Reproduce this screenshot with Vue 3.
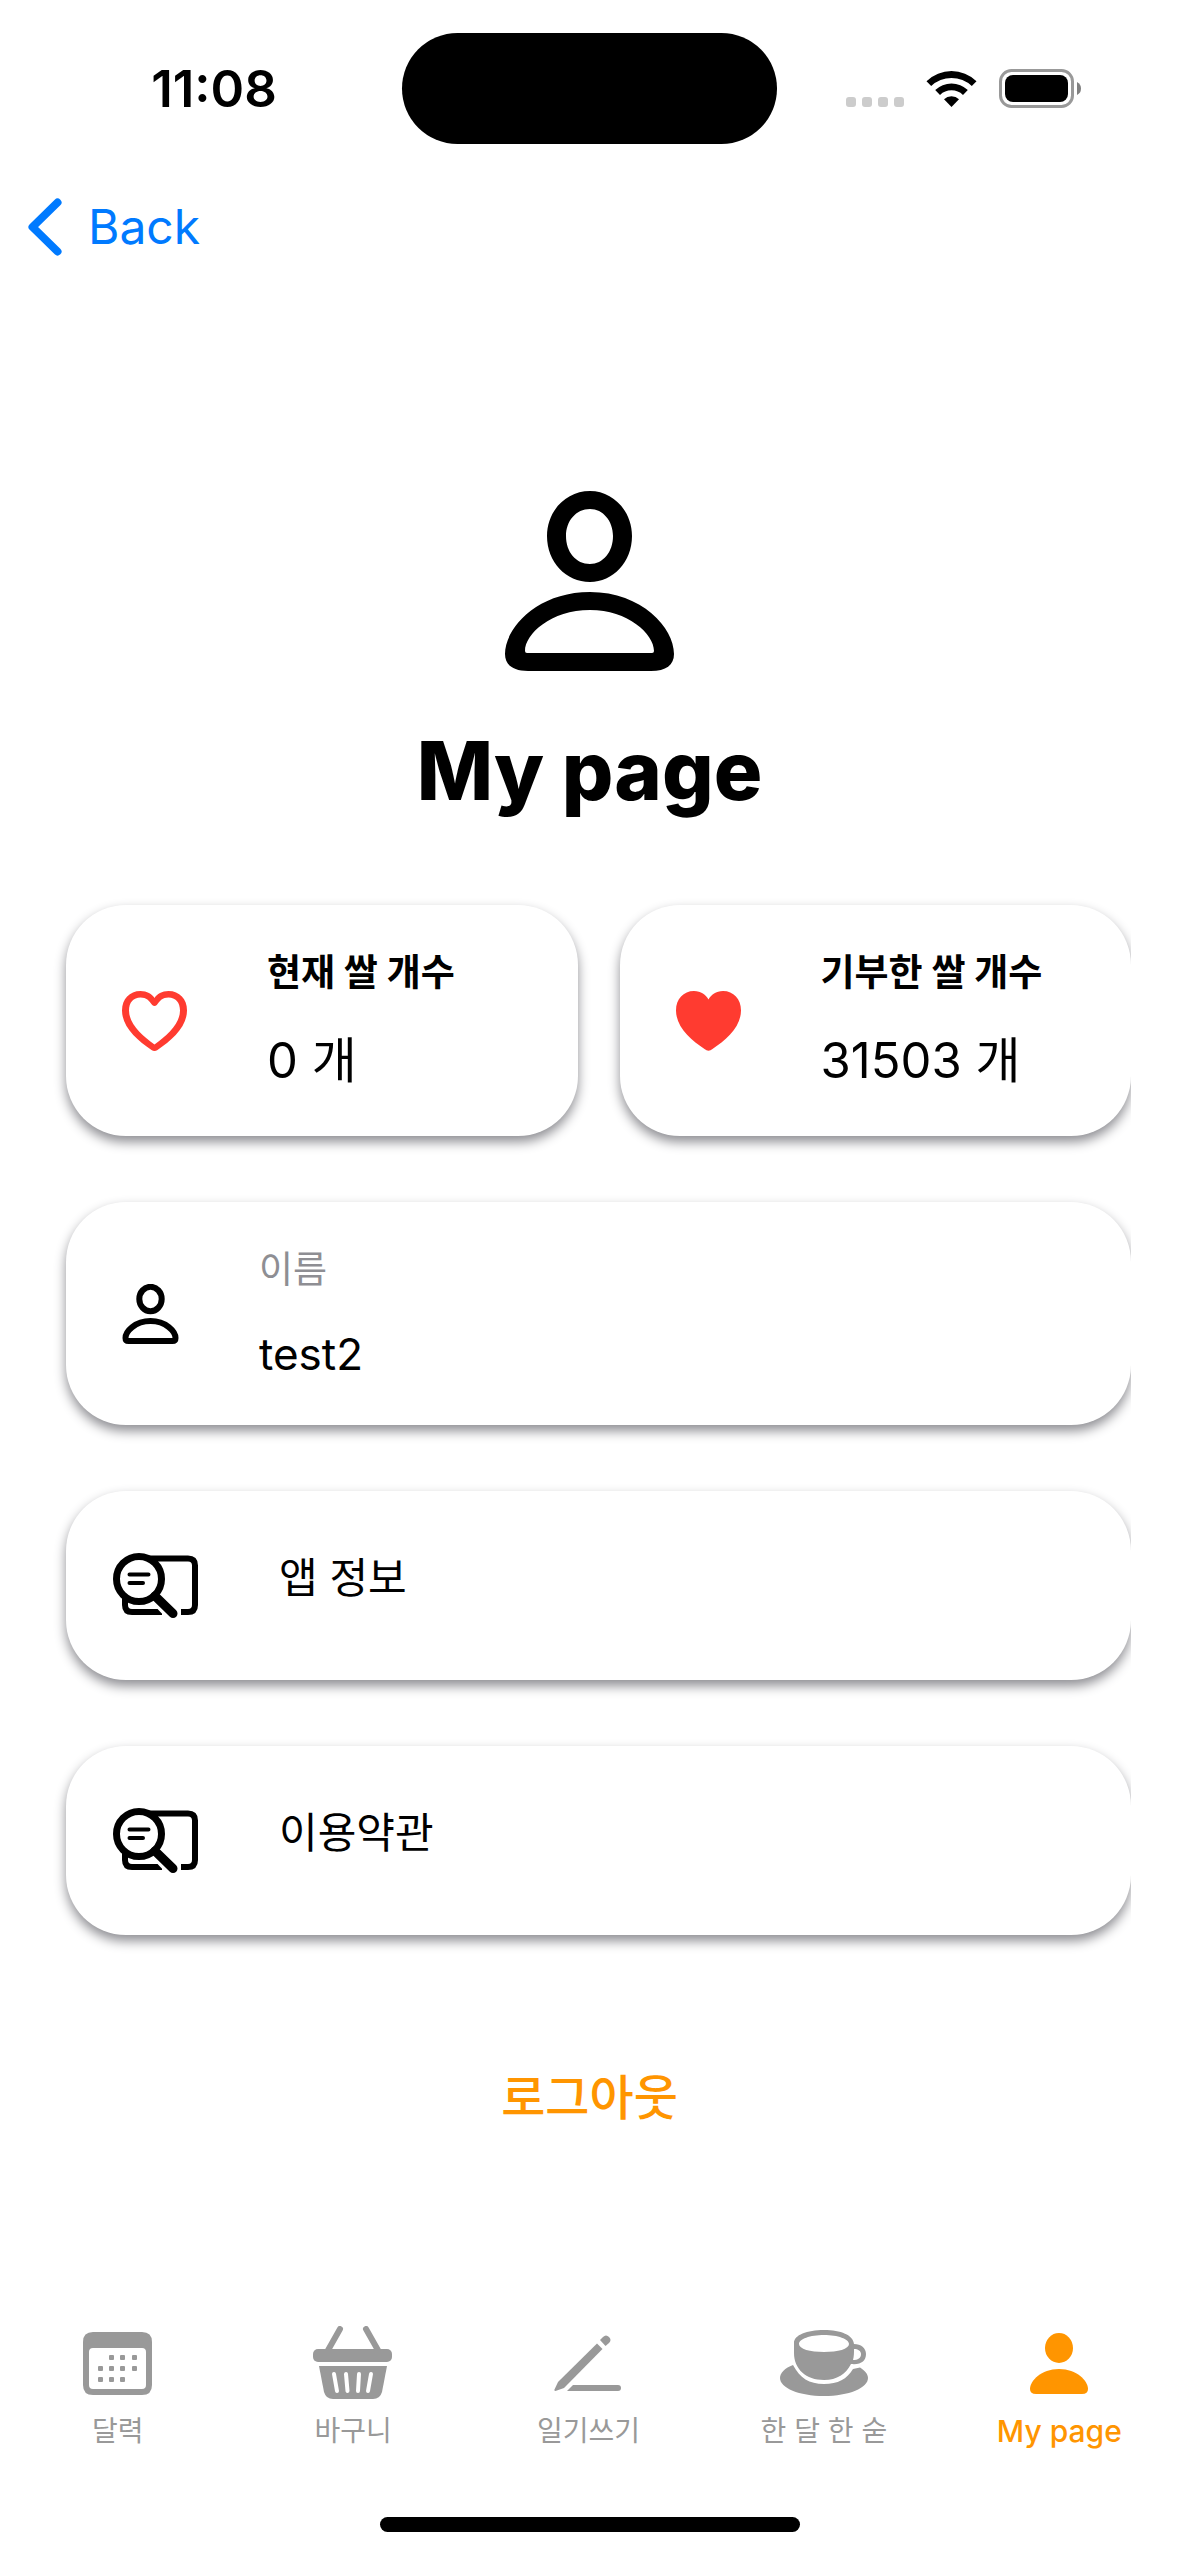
<script setup>
import { ref } from 'vue'

const stats = [
  { id: 'current', label: '현재 쌀 개수', value: '0 개', filled: false },
  { id: 'donated', label: '기부한 쌀 개수', value: '31503 개', filled: true },
]

const links = [
  { id: 'info', label: '앱 정보' },
  { id: 'terms', label: '이용약관' },
]

const tabs = [
  { id: 'calendar', label: '달력' },
  { id: 'basket', label: '바구니' },
  { id: 'write', label: '일기쓰기' },
  { id: 'cup', label: '한 달 한 숟' },
  { id: 'mypage', label: 'My page' },
]

const activeTab = ref('mypage')
const calendarDots = [
  [28, 23], [39, 23], [51, 23],
  [17, 34], [28, 34], [39, 34], [51, 34],
  [17, 45], [28, 45], [39, 45],
]
</script>

<template>
  <div class="screen">
    <header class="status">
      <div class="status-side">
        <time class="clock">11:08</time>
      </div>
      <div class="island"></div>
      <div class="status-side indicators">
        <svg class="signal" width="58" height="10" viewBox="0 0 58 10" aria-hidden="true">
          <rect v-for="n in 4" :key="n" :x="(n - 1) * 16" y="0" width="10" height="10" rx="3" />
        </svg>
        <svg class="wifi" width="51" height="38" viewBox="0 0 51 38" aria-hidden="true">
          <path d="M0.5 11.2 A36 36 0 0 1 50.5 11.2 L45.8 16 A29.5 29.5 0 0 0 5.2 16 Z" />
          <path d="M9.2 20 A23.5 23.5 0 0 1 41.8 20 L37 25 A16.6 16.6 0 0 0 14 25 Z" />
          <path d="M18 29.2 A11 11 0 0 1 33 29.2 L25.5 37 Z" />
        </svg>
        <svg class="battery" width="83" height="39" viewBox="0 0 83 39" aria-hidden="true">
          <rect x="1.5" y="1.5" width="72" height="36" rx="11" fill="none" stroke="#999" stroke-width="3" />
          <rect x="6" y="6" width="63" height="27" rx="8" />
          <path d="M78 13 Q82 15 82 19.500 Q82 24 78 26 Z" fill="#808080" />
        </svg>
      </div>
    </header>

    <nav class="topbar">
      <button class="back" type="button">
        <svg width="34" height="58" viewBox="0 0 34 58" aria-hidden="true">
          <path d="M29.500 4.500 L4.500 29 L29.500 53.500" fill="none" stroke="currentColor" stroke-width="8" stroke-linecap="round" stroke-linejoin="round" />
        </svg>
        <span>Back</span>
      </button>
    </nav>

    <main class="content">
      <section class="hero">
        <svg width="170" height="180" viewBox="0 0 170 180" aria-hidden="true">
          <path fill-rule="evenodd" d="M85 0 C108 0 127 20 127 45 C127 71 108 91 85 91 C61 91 42 71 42 45 C42 20 61 0 85 0 Z M85 18 C71 18 61 30 61 45 C61 61 71 73 85 73 C98 73 108 61 108 45 C108 30 98 18 85 18 Z" />
          <path fill-rule="evenodd" d="M85 101 C137 101 169 137 169 163 C169 174 161 180 146 180 H23 C8 180 0 174 0 163 C0 137 32 101 85 101 Z M85 119 C46 119 20 143 20 160 Q20 162 22 162 H147 Q149 162 149 160 C149 143 123 119 85 119 Z" />
        </svg>
        <h1>My page</h1>
      </section>

      <div class="cards">
        <div class="stats">
          <section v-for="stat in stats" :key="stat.id" class="card stat">
            <svg class="heart" width="65" height="60" viewBox="0 0 65 60" aria-hidden="true">
              <path v-if="stat.filled" d="M32.500 8.500 C35 4 40 0 47 0 C57.500 0 65 8 65 19.500 C65 36 50 49 36.500 58 Q32.500 61.500 28.500 58 C15 49 0 36 0 19.500 C0 8 7.500 0 18 0 C25 0 30 4 32.500 8.500 Z" />
              <path v-else fill-rule="evenodd" d="M32.500 7 C35 3 40 0 46.500 0 C57.500 0 65 8 65 19.500 C65 36 50 49 35.500 59 Q32.500 61 29.500 59 C15 49 0 36 0 19.500 C0 8 7.500 0 18.500 0 C25 0 30 3 32.500 7 Z M32.500 53.500 C45 44.500 58 33 58 19.500 C58 11.500 53.500 6.500 46.500 6.500 C40.500 6.500 38 9.500 34.800 14 Q32.500 16 30.200 14 C27 9.500 24.500 6.500 18.500 6.500 C11.500 6.500 7 11.500 7 19.500 C7 33 20 44.500 32.500 53.500 Z" />
            </svg>
            <div class="lines">
              <h2>{{ stat.label }}</h2>
              <p class="amount">{{ stat.value }}</p>
            </div>
          </section>
        </div>

        <section class="card profile">
          <svg width="57" height="60" viewBox="0 0 57 60" fill="none" stroke="#000" stroke-width="6" aria-hidden="true">
            <ellipse cx="28.500" cy="15" rx="11.200" ry="12.200" />
            <path d="M28.500 37 C44 37 53.500 47.500 53.500 54 Q53.500 57 50.500 57 H6.500 Q3.500 57 3.500 54 C3.500 47.500 13 37 28.500 37 Z" />
          </svg>
          <div class="lines">
            <p class="caption">이름</p>
            <p class="name">test2</p>
          </div>
        </section>

        <a v-for="link in links" :key="link.id" class="card link" :href="'#' + link.id">
          <svg width="86" height="66" viewBox="0 0 86 66" fill="none" stroke="#000" aria-hidden="true">
            <path d="M36 5.500 H75 Q82 5.500 82 12.500 V52 Q82 59 75 59 H68 M12 44 V52 Q12 59 19 59 H49" stroke-width="6" />
            <path d="M39 38 L60 60" stroke="#fff" stroke-width="17" />
            <circle cx="26" cy="26" r="22.500" fill="#fff" stroke-width="7" />
            <path d="M42 43 L60 60.500" stroke-width="9" stroke-linecap="round" />
            <path d="M16.500 21.500 H35.500 M16.500 30 H30" stroke-width="4" stroke-linecap="round" />
          </svg>
          <span>{{ link.label }}</span>
        </a>
      </div>

      <button class="logout" type="button">로그아웃</button>
    </main>

    <footer class="bottom">
      <nav class="tabs">
        <button
          v-for="tab in tabs"
          :key="tab.id"
          class="tab"
          :class="{ active: tab.id === activeTab }"
          type="button"
          @click="activeTab = tab.id"
        >
          <span class="tab-icon">
            <svg v-if="tab.id === 'calendar'" width="69" height="63" viewBox="0 0 69 63" aria-hidden="true">
              <path fill-rule="evenodd" d="M10 0 H59 Q69 0 69 10 V53 Q69 63 59 63 H10 Q0 63 0 53 V10 Q0 0 10 0 Z M10 16 Q6 16 6 20 V53 Q6 57 10 57 H59 Q63 57 63 53 V20 Q63 16 59 16 Z" />
              <rect v-for="([x, y], i) in calendarDots" :key="i" :x="x - 2" :y="y" width="5" height="5" rx="1" />
            </svg>
            <svg v-else-if="tab.id === 'basket'" width="80" height="74" viewBox="0 0 80 74" aria-hidden="true">
              <path d="M27 3 L14 26 M53 3 L66 26" fill="none" stroke="currentColor" stroke-width="6" stroke-linecap="round" />
              <rect x="0" y="23" width="79" height="13" rx="5" />
              <path d="M6 40 H74 L69 66 Q67 73 60 73 H20 Q13 73 11 66 Z" />
              <path d="M21 48 L24 65 M33 48 L34.500 65 M46 48 L45 65 M58 48 L55 65" stroke="#fff" stroke-width="4" stroke-linecap="round" />
            </svg>
            <svg v-else-if="tab.id === 'write'" width="68" height="57" viewBox="0 0 68 57" aria-hidden="true">
              <path d="M43 8.500 L48.500 14 L10 53 L1.500 56 Q0 56 0.500 54.500 L4 47 Z" />
              <path d="M46 5 L49 2 Q52 -1 55 2 Q58 5 55 8 L51.500 11 Z" />
              <path d="M13 56 L19 50 H64 Q67 50 67 53 Q67 56 64 56 Z" />
            </svg>
            <svg v-else-if="tab.id === 'cup'" width="88" height="66" viewBox="0 0 88 66" aria-hidden="true">
              <path d="M13 35 C20 48 29 54 44 54 C58 54 67 49 73 39 L80 37.500 C85 41 88 44 88 48 C88 58 69 66 44 66 C19 66 0 58 0 48 C0 43 5 38 13 35 Z" />
              <path fill-rule="evenodd" d="M44 0 C61 0 73 5 74 14 C81 14 86 18 86 24 C86 31 81 35 71 34 C66 44 57 50 44 50 C26 50 14 39 14 23 V13 C14 5 27 0 44 0 Z M44 5 C30 5 19 9 19 14 C19 19 30 22 44 22 C58 22 69 19 69 14 C69 9 58 5 44 5 Z M74 19 C74 23 74 26 73 30 C78 30 81 28 81 24 C81 21 78 19 74 19 Z" />
            </svg>
            <svg v-else width="58" height="61" viewBox="0 0 58 61" aria-hidden="true">
              <ellipse cx="29" cy="15" rx="14" ry="15" />
              <path d="M29 36 C47 36 58 48 58 56 Q58 61 52 61 H6 Q0 61 0 56 C0 48 11 36 29 36 Z" />
            </svg>
          </span>
          <span class="tab-label">{{ tab.label }}</span>
        </button>
      </nav>
      <div class="home-bar"></div>
    </footer>
  </div>
</template>

<style>
body {
  background: #fff;
}
</style>

<style scoped>
.screen {
  display: flex;
  flex-direction: column;
  min-height: 100vh;
  color: #000;
  font-family: Inter, "Noto Sans CJK KR", sans-serif;
}

h1,
h2,
p {
  margin: 0;
}

button {
  padding: 0;
  border: 0;
  background: none;
  font: inherit;
}

svg {
  display: block;
  flex: none;
}

.status {
  display: grid;
  grid-template-columns: minmax(0, 1fr) 375px minmax(0, 1fr);
  padding-top: 33px;
}

.status-side {
  display: flex;
  align-items: center;
  justify-content: center;
  padding-left: 26px;
}

.clock {
  font-size: 51px;
  font-weight: 600;
  line-height: 60px;
}

.island {
  height: 111px;
  border-radius: 56px;
  background: #000;
}

.status-side.indicators {
  justify-content: flex-end;
  padding: 0 97px 0 0;
}

.signal {
  margin-top: 26px;
  margin-right: 22px;
  fill: #ccc;
}

.wifi {
  margin-right: 22px;
}

.topbar {
  padding: 48px 28px 0;
}

.back {
  display: flex;
  align-items: center;
  gap: 26px;
  color: #007aff;
  font-size: 48px;
  line-height: 70px;
}

.content {
  display: flex;
  flex-direction: column;
}

.hero {
  display: flex;
  flex-direction: column;
  align-items: center;
  gap: 50px;
  padding-top: 229px;
}

h1 {
  font-size: 81px;
  font-weight: 800;
  line-height: 100px;
}

/* The right edge cuts off the shadows of the cards. */
.cards {
  display: flex;
  flex-direction: column;
  gap: 66px;
  margin-top: 84px;
  margin-right: 48px;
  padding-left: 66px;
  overflow-x: clip;
}

.stats {
  display: grid;
  grid-template-columns: 1fr 1fr;
  gap: 42px;
}

.card {
  display: flex;
  align-items: center;
  gap: 80px;
  padding: 44px 56px 43px;
  border-radius: 60px;
  background: #fff;
  box-shadow: 0 6px 12px #8e8e93;
}

.heart {
  fill: #ff3b30;
}

.lines {
  display: flex;
  flex-direction: column;
  gap: 32px;
  white-space: nowrap;
}

h2 {
  font-size: 37px;
  font-weight: 700;
  line-height: 48px;
}

.amount {
  font-size: 49px;
  line-height: 64px;
}

.caption {
  color: #8e8e93;
  font-size: 37px;
  line-height: 48px;
}

.name {
  font-size: 44px;
  line-height: 56px;
}

.link {
  padding: 57px 47px 56px;
  color: inherit;
  font-size: 42px;
  line-height: 60px;
  text-decoration: none;
}

.link span {
  padding-bottom: 16px;
}

.logout {
  align-self: center;
  margin-top: 128px;
  color: #ff9500;
  font-size: 48px;
  font-weight: 500;
  line-height: 70px;
}

.bottom {
  margin-top: auto;
  padding-bottom: 24px;
}

.tabs {
  display: grid;
  grid-template-columns: repeat(5, minmax(0, 1fr));
  padding-right: 2px;
}

.tab {
  display: flex;
  flex-direction: column;
  align-items: center;
  gap: 10px;
  color: #999;
  fill: #999;
  font-size: 28px;
  line-height: 40px;
  white-space: nowrap;
}

.tab.active {
  color: #ff9500;
  fill: #ff9500;
  font-size: 30px;
  font-weight: 500;
}

.tab-icon {
  display: flex;
  align-items: center;
  height: 76px;
}

.home-bar {
  width: 420px;
  height: 15px;
  margin: 66px auto 0;
  border-radius: 8px;
  background: #000;
}
</style>
